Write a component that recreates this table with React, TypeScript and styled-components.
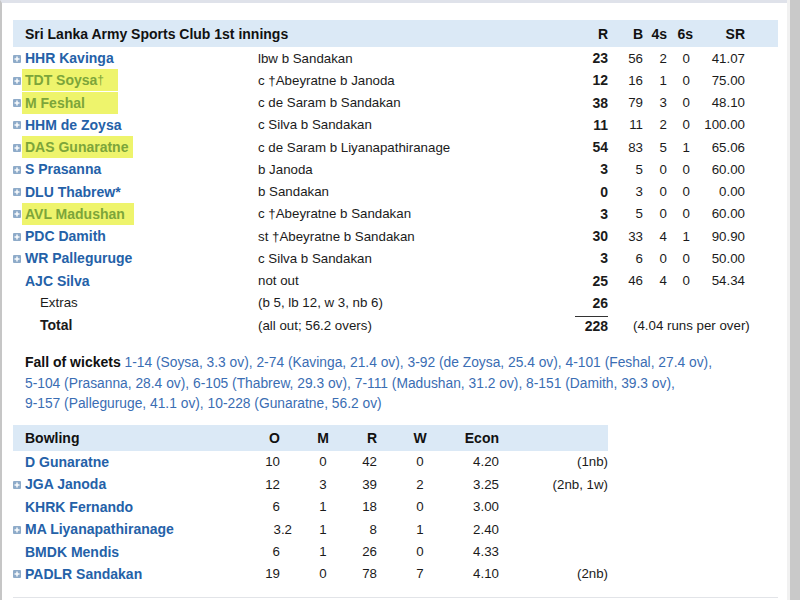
import styled, { createGlobalStyle } from 'styled-components';

const GlobalStyle = createGlobalStyle`
    html, body {
        margin: 0;
        padding: 0;
        background: #fff;
    }
    body {
        font-family: "Liberation Sans", Arial, sans-serif;
        font-size: 13.3px;
        color: #1b1b1b;
    }
`;

const Page = styled.div`
    display: flex;
    width: 800px;
    height: 600px;
    overflow: hidden;
`;

const Panel = styled.div`
    flex: 1;
    display: flex;
    flex-direction: column;
    border-left: 2px solid #c6c6c6;
    border-top: 3px solid #dfe2ea;
    padding: 17px 9px 0 11px;
`;

const ScrollTrack = styled.div`
    width: 10px;
    border-left: 3px solid #f1f1f1;
    background: #c9c9c9;
`;

const batCols = '12px 233px 300px 50px 35px 24px 26px 52px 33px';
const bowlCols = '12px 205px 65px 56px 26px 86px 36px 109px';

const HeadBar = styled.div<{ $cols: string; $h: number }>`
    display: grid;
    grid-template-columns: ${(p) => p.$cols};
    align-items: center;
    height: ${(p) => p.$h}px;
    background: #dbe9f6;
    font-weight: bold;
    font-size: 14px;
    color: #111;
    white-space: nowrap;
`;

const Row = styled.div<{ $cols: string; $h: number }>`
    display: grid;
    grid-template-columns: ${(p) => p.$cols};
    align-items: center;
    height: ${(p) => p.$h}px;
    white-space: nowrap;
`;

const Cell = styled.div<{ $align?: 'left' | 'right' | 'center'; $bold?: boolean; $pr?: number }>`
    text-align: ${(p) => p.$align ?? 'left'};
    font-weight: ${(p) => (p.$bold ? 'bold' : 'normal')};
    font-size: ${(p) => (p.$bold ? '14px' : '13.3px')};
    padding-right: ${(p) => p.$pr ?? 0}px;
`;

const Title = styled.div`
    grid-column: span 2;
`;

// the yellow marker strokes are hand drawn, so they reach past the names
const PlayerName = styled.span<{ $mark?: number }>`
    display: inline-block;
    box-sizing: border-box;
    font-weight: bold;
    font-size: 14px;
    color: ${(p) => (p.$mark ? '#7ca53a' : '#2461a8')};
    background: ${(p) => (p.$mark ? '#eef46c' : 'transparent')};
    min-width: ${(p) => (p.$mark ? `${p.$mark}px` : '0')};
    padding: ${(p) => (p.$mark ? '3px 4px 3px 3px' : '0')};
    margin-left: ${(p) => (p.$mark ? '-3px' : '0')};
`;

const Dagger = styled.span`
    font-weight: normal;
    font-size: 12px;
    vertical-align: 1px;
`;

const PlusBox = styled.svg`
    display: block;
    margin-top: 1px;
`;

const Indented = styled.span<{ $bold?: boolean }>`
    padding-left: 15px;
    font-weight: ${(p) => (p.$bold ? 'bold' : 'normal')};
    font-size: ${(p) => (p.$bold ? '14px' : '13.3px')};
`;

const Ruled = styled.span`
    display: inline-block;
    border-top: 1px solid #333;
    padding: 1px 0 0 10px;
`;

const RunRate = styled.div`
    grid-column: span 5;
    padding-left: 25px;
`;

const Fow = styled.div`
    margin: 16px 0 10px;
    padding-left: 12px;
    line-height: 20.5px;
    font-size: 13.8px;
    color: #3a6db3;
    white-space: nowrap;
`;

const FowLabel = styled.span`
    font-weight: bold;
    font-size: 14px;
    color: #111;
`;

const BowlBlock = styled.div`
    width: 595px;
`;

const Footer = styled.div`
    margin-top: 12px;
    border-top: 1px solid #e2e4e8;
`;

function Plus() {
    return (
        <PlusBox width="8" height="8" viewBox="0 0 8 8">
            <rect x="0" y="0" width="8" height="8" rx="1" fill="#8eabc9" />
            <rect x="1.5" y="3.3" width="5" height="1.4" fill="#fff" />
            <rect x="3.3" y="1.5" width="1.4" height="5" fill="#fff" />
        </PlusBox>
    );
}

interface Batter {
    name: string;
    keeper?: boolean;
    how: string;
    r: number;
    b: number;
    fours: number;
    sixes: number;
    sr: string;
    mark?: number;
    plus?: boolean;
}

const batting: Batter[] = [
    { name: 'HHR Kavinga', how: 'lbw b Sandakan', r: 23, b: 56, fours: 2, sixes: 0, sr: '41.07', plus: true },
    { name: 'TDT Soysa', keeper: true, how: 'c †Abeyratne b Janoda', r: 12, b: 16, fours: 1, sixes: 0, sr: '75.00', mark: 96, plus: true },
    { name: 'M Feshal', how: 'c de Saram b Sandakan', r: 38, b: 79, fours: 3, sixes: 0, sr: '48.10', mark: 96, plus: true },
    { name: 'HHM de Zoysa', how: 'c Silva b Sandakan', r: 11, b: 11, fours: 2, sixes: 0, sr: '100.00', plus: true },
    { name: 'DAS Gunaratne', how: 'c de Saram b Liyanapathiranage', r: 54, b: 83, fours: 5, sixes: 1, sr: '65.06', mark: 111, plus: true },
    { name: 'S Prasanna', how: 'b Janoda', r: 3, b: 5, fours: 0, sixes: 0, sr: '60.00', plus: true },
    { name: 'DLU Thabrew*', how: 'b Sandakan', r: 0, b: 3, fours: 0, sixes: 0, sr: '0.00', plus: true },
    { name: 'AVL Madushan', how: 'c †Abeyratne b Sandakan', r: 3, b: 5, fours: 0, sixes: 0, sr: '60.00', mark: 112, plus: true },
    { name: 'PDC Damith', how: 'st †Abeyratne b Sandakan', r: 30, b: 33, fours: 4, sixes: 1, sr: '90.90', plus: true },
    { name: 'WR Palleguruge', how: 'c Silva b Sandakan', r: 3, b: 6, fours: 0, sixes: 0, sr: '50.00', plus: true },
    { name: 'AJC Silva', how: 'not out', r: 25, b: 46, fours: 4, sixes: 0, sr: '54.34' },
];

interface Bowler {
    name: string;
    o: string;
    m: number;
    r: number;
    w: number;
    econ: string;
    extras?: string;
    plus?: boolean;
}

const bowling: Bowler[] = [
    { name: 'D Gunaratne', o: '10', m: 0, r: 42, w: 0, econ: '4.20', extras: '(1nb)' },
    { name: 'JGA Janoda', o: '12', m: 3, r: 39, w: 2, econ: '3.25', extras: '(2nb, 1w)', plus: true },
    { name: 'KHRK Fernando', o: '6', m: 1, r: 18, w: 0, econ: '3.00' },
    { name: 'MA Liyanapathiranage', o: '3.2', m: 1, r: 8, w: 1, econ: '2.40', plus: true },
    { name: 'BMDK Mendis', o: '6', m: 1, r: 26, w: 0, econ: '4.33' },
    { name: 'PADLR Sandakan', o: '19', m: 0, r: 78, w: 7, econ: '4.10', extras: '(2nb)', plus: true },
];

const rowH = 22.25;
const bowlRowH = 22.4;

export default function App() {
    return (
        <Page>
            <GlobalStyle />
            <Panel>
                <HeadBar $cols={batCols} $h={27}>
                    <div />
                    <Title>Sri Lanka Army Sports Club 1st innings</Title>
                    <Cell $align="right" $bold>R</Cell>
                    <Cell $align="right" $bold>B</Cell>
                    <Cell $align="right" $bold>4s</Cell>
                    <Cell $align="right" $bold>6s</Cell>
                    <Cell $align="right" $bold>SR</Cell>
                    <div />
                </HeadBar>
                {batting.map((p) => (
                    <Row key={p.name} $cols={batCols} $h={rowH}>
                        <div>{p.plus && <Plus />}</div>
                        <div>
                            <PlayerName $mark={p.mark}>
                                {p.name}
                                {p.keeper && <Dagger>†</Dagger>}
                            </PlayerName>
                        </div>
                        <Cell>{p.how}</Cell>
                        <Cell $align="right" $bold>{p.r}</Cell>
                        <Cell $align="right">{p.b}</Cell>
                        <Cell $align="right">{p.fours}</Cell>
                        <Cell $align="right" $pr={3}>{p.sixes}</Cell>
                        <Cell $align="right">{p.sr}</Cell>
                        <div />
                    </Row>
                ))}
                <Row $cols={batCols} $h={rowH}>
                    <div />
                    <div><Indented>Extras</Indented></div>
                    <Cell>(b 5, lb 12, w 3, nb 6)</Cell>
                    <Cell $align="right" $bold>26</Cell>
                </Row>
                <Row $cols={batCols} $h={rowH}>
                    <div />
                    <div><Indented $bold>Total</Indented></div>
                    <Cell>(all out; 56.2 overs)</Cell>
                    <Cell $align="right" $bold><Ruled>228</Ruled></Cell>
                    <RunRate>(4.04 runs per over)</RunRate>
                </Row>

                <Fow>
                    <FowLabel>Fall of wickets</FowLabel>{' '}
                    1-14 (Soysa, 3.3 ov), 2-74 (Kavinga, 21.4 ov), 3-92 (de Zoysa, 25.4 ov), 4-101 (Feshal, 27.4 ov),
                    <br />
                    5-104 (Prasanna, 28.4 ov), 6-105 (Thabrew, 29.3 ov), 7-111 (Madushan, 31.2 ov), 8-151 (Damith, 39.3 ov),
                    <br />
                    9-157 (Palleguruge, 41.1 ov), 10-228 (Gunaratne, 56.2 ov)
                </Fow>

                <BowlBlock>
                    <HeadBar $cols={bowlCols} $h={26}>
                        <div />
                        <div>Bowling</div>
                        <Cell $align="right" $bold $pr={15}>O</Cell>
                        <Cell $align="center" $bold>M</Cell>
                        <Cell $align="right" $bold>R</Cell>
                        <Cell $align="center" $bold>W</Cell>
                        <Cell $align="right" $bold>Econ</Cell>
                        <div />
                    </HeadBar>
                    {bowling.map((b) => (
                        <Row key={b.name} $cols={bowlCols} $h={bowlRowH}>
                            <div>{b.plus && <Plus />}</div>
                            <div><PlayerName>{b.name}</PlayerName></div>
                            <Cell $align="right" $pr={b.o.includes('.') ? 3 : 15}>{b.o}</Cell>
                            <Cell $align="center">{b.m}</Cell>
                            <Cell $align="right">{b.r}</Cell>
                            <Cell $align="center">{b.w}</Cell>
                            <Cell $align="right">{b.econ}</Cell>
                            <Cell $align="right">{b.extras}</Cell>
                        </Row>
                    ))}
                </BowlBlock>
                <Footer />
            </Panel>
            <ScrollTrack />
        </Page>
    );
}
